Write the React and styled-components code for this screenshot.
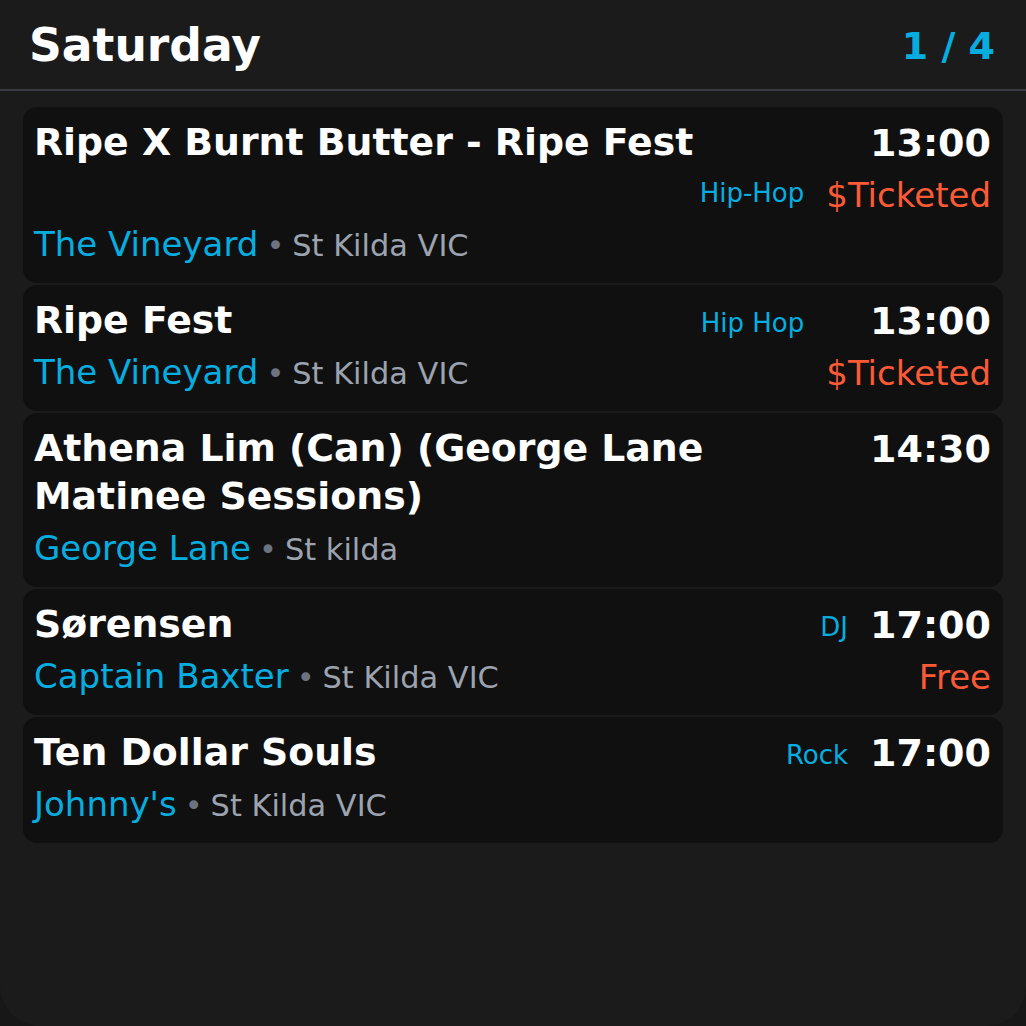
import React from 'react';
import styled, { createGlobalStyle } from 'styled-components';

const GlobalStyle = createGlobalStyle`
  html, body {
    margin: 0;
    padding: 0;
    background: #171717;
  }
  body {
    font-family: "DejaVu Sans", "Liberation Sans", sans-serif;
  }
`;

const events = [
  {
    title: 'Ripe X Burnt Butter - Ripe Fest',
    time: '13:00',
    genre: 'Hip-Hop',
    price: '$Ticketed',
    venue: 'The Vineyard',
    location: 'St Kilda VIC',
    stacked: true,
  },
  {
    title: 'Ripe Fest',
    time: '13:00',
    genre: 'Hip Hop',
    price: '$Ticketed',
    venue: 'The Vineyard',
    location: 'St Kilda VIC',
  },
  {
    title: 'Athena Lim (Can) (George Lane Matinee Sessions)',
    time: '14:30',
    venue: 'George Lane',
    location: 'St kilda',
  },
  {
    title: 'Sørensen',
    time: '17:00',
    genre: 'DJ',
    price: 'Free',
    venue: 'Captain Baxter',
    location: 'St Kilda VIC',
  },
  {
    title: 'Ten Dollar Souls',
    time: '17:00',
    genre: 'Rock',
    venue: "Johnny's",
    location: 'St Kilda VIC',
  },
];

const Widget = styled.div`
  height: 1026px;
  background: #1b1b1b;
  border-radius: 0 0 40px 40px;
  overflow: hidden;
`;

const Header = styled.header`
  display: flex;
  align-items: center;
  justify-content: space-between;
  height: 91px;
  padding: 2px 31px 0 29px;
  box-sizing: border-box;
  border-bottom: 2px solid #363b45;
`;

const Day = styled.h1`
  margin: 0;
  font-size: 45.6px;
  line-height: 54px;
  font-weight: 700;
  color: #ffffff;
`;

const Pager = styled.span`
  font-size: 38px;
  line-height: 54px;
  font-weight: 700;
  color: #06aee0;
`;

const List = styled.div`
  display: flex;
  flex-direction: column;
  gap: 2px;
  padding: 16px 23px;
`;

const Card = styled.article`
  display: grid;
  grid-template-columns: 1fr auto auto;
  grid-template-areas: ${(p) =>
    p.$stacked
      ? `"title title time" ". genre price" "venue venue venue"`
      : `"title genre time" "venue venue price"`};
  column-gap: 22px;
  align-items: start;
  padding: 11px 12px 11px 11px;
  background: #101010;
  border-radius: 14px;
`;

const Title = styled.h2`
  grid-area: title;
  margin: 0;
  font-size: 37.8px;
  line-height: 48px;
  font-weight: 700;
  color: #ffffff;
`;

const Time = styled.span`
  grid-area: time;
  justify-self: end;
  padding-top: 2px;
  font-size: 38px;
  line-height: 46px;
  font-weight: 700;
  color: #ffffff;
`;

const Genre = styled.span`
  grid-area: genre;
  justify-self: end;
  padding-top: 6px;
  font-size: 26px;
  line-height: 42px;
  color: #06aee0;
`;

const Price = styled.span`
  grid-area: price;
  justify-self: end;
  padding-top: 8px;
  font-size: 34px;
  line-height: 42px;
  color: #fb5a36;
`;

const Place = styled.div`
  grid-area: venue;
  font-size: 34px;
  line-height: 56px;
  height: 56px;
  white-space: nowrap;
`;

const Venue = styled.span`
  color: #06aee0;
`;

const Dot = styled.span`
  margin: 0 8px;
  font-size: 30.4px;
  line-height: 1;
  color: #6b7280;
`;

const Location = styled.span`
  font-size: 30.4px;
  line-height: 1;
  color: #9ca3af;
`;

const EventCard = ({ event }) => (
  <Card $stacked={event.stacked}>
    <Title>{event.title}</Title>
    {event.genre && <Genre>{event.genre}</Genre>}
    <Time>{event.time}</Time>
    {event.price && <Price>{event.price}</Price>}
    <Place>
      <Venue>{event.venue}</Venue>
      <Dot>•</Dot>
      <Location>{event.location}</Location>
    </Place>
  </Card>
);

export default function App() {
  return (
    <>
      <GlobalStyle />
      <Widget>
        <Header>
          <Day>Saturday</Day>
          <Pager>1 / 4</Pager>
        </Header>
        <List>
          {events.map((event, i) => (
            <EventCard key={i} event={event} />
          ))}
        </List>
      </Widget>
    </>
  );
}
